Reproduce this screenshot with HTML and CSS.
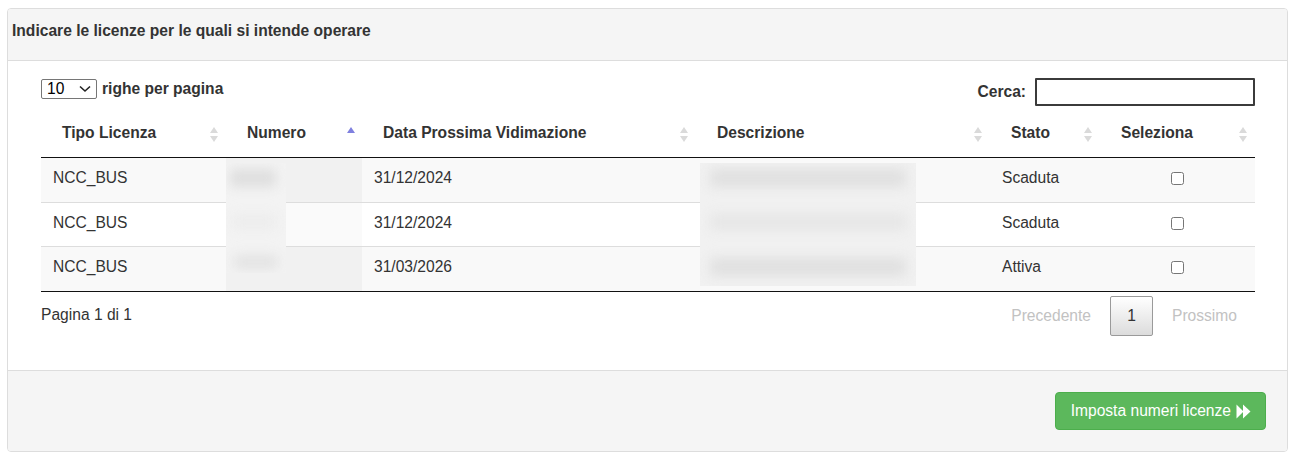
FILE: index.html
```html
<!DOCTYPE html>
<html lang="it">
<head>
<meta charset="utf-8">
<title>Licenze</title>
<link rel="stylesheet" href="styles.css">
</head>
<body>
<div class="panel">
  <div class="panel-heading">
    <h3 class="panel-title">Indicare le licenze per le quali si intende operare</h3>
  </div>
  <div class="panel-body">
    <div class="dt-top">
      <label class="dt-length">
        <span class="select-wrap">
          <select class="len-select"><option>10</option><option>25</option><option>50</option></select>
          <svg class="chev" width="12" height="8" viewBox="0 0 12 8" aria-hidden="true"><path d="M1 1.5 L6 6 L11 1.5" fill="none" stroke="#222" stroke-width="1.6"/></svg>
        </span>
        <span>righe per pagina</span>
      </label>
      <label class="dt-filter">
        <span>Cerca:</span>
        <input type="search" class="search-input">
      </label>
    </div>
    <div class="tbl-wrap">
      <table class="dt-table">
        <colgroup>
          <col class="c1"><col class="c2"><col class="c3"><col class="c4"><col class="c5"><col class="c6">
        </colgroup>
        <thead>
          <tr>
            <th class="sort">Tipo Licenza<span class="sort-icons"><i class="up"></i><i class="down"></i></span></th>
            <th class="sort asc">Numero<span class="sort-icons"><i class="up active"></i></span></th>
            <th class="sort">Data Prossima Vidimazione<span class="sort-icons"><i class="up"></i><i class="down"></i></span></th>
            <th class="sort">Descrizione<span class="sort-icons"><i class="up"></i><i class="down"></i></span></th>
            <th class="sort">Stato<span class="sort-icons"><i class="up"></i><i class="down"></i></span></th>
            <th class="sort">Seleziona<span class="sort-icons"><i class="up"></i><i class="down"></i></span></th>
          </tr>
        </thead>
        <tbody>
          <tr class="odd">
            <td>NCC_BUS</td><td class="sorted"></td><td>31/12/2024</td><td></td><td>Scaduta</td><td class="center"><input type="checkbox" class="chk"></td>
          </tr>
          <tr class="even">
            <td>NCC_BUS</td><td class="sorted"></td><td>31/12/2024</td><td></td><td>Scaduta</td><td class="center"><input type="checkbox" class="chk"></td>
          </tr>
          <tr class="odd">
            <td>NCC_BUS</td><td class="sorted"></td><td>31/03/2026</td><td></td><td>Attiva</td><td class="center"><input type="checkbox" class="chk"></td>
          </tr>
        </tbody>
      </table>
      <div class="redact redact-num">
        <span class="blob b1"></span>
        <span class="blob b2"></span>
        <span class="blob b3"></span>
      </div>
      <div class="redact redact-desc">
        <span class="line l1"></span>
        <span class="line l2"></span>
        <span class="line l3"></span>
      </div>
    </div>
    <div class="dt-bottom">
      <div class="dt-info">Pagina 1 di 1</div>
      <div class="dt-paginate">
        <span class="pg-link disabled">Precedente</span>
        <span class="pg-btn current">1</span>
        <span class="pg-link disabled">Prossimo</span>
      </div>
    </div>
  </div>
  <div class="panel-footer">
    <button class="btn-success" type="button">Imposta numeri licenze
      <svg class="fw-icon" width="15" height="15" viewBox="0 0 15 15" aria-hidden="true"><path d="M0.5 0.5 L7.5 7.5 L0.5 14.5 Z M7 0.5 L14.5 7.5 L7 14.5 Z" fill="#ffffff"/></svg>
    </button>
  </div>
</div>
</body>
</html>
```

FILE: styles.css
```css
* { box-sizing: border-box; }

html, body {
  margin: 0;
  padding: 0;
  background: #ffffff;
}

body {
  font-family: "Liberation Sans", Arial, sans-serif;
  font-size: 15.6px;
  color: #333333;
  padding: 8px 1px 0 7px;
}

.panel {
  border: 1px solid #dddddd;
  border-radius: 4px;
  background: #ffffff;
}

.panel-heading {
  background: #f5f5f5;
  border-bottom: 1px solid #dddddd;
  padding: 13px 5px 20px 4px;
  border-radius: 3px 3px 0 0;
}

.panel-title {
  margin: 0;
  font-size: 15.6px;
  line-height: 18px;
  font-weight: bold;
  color: #333333;
}

.panel-body {
  padding: 17px 32px 34px 33px;
}

/* top controls */
.dt-top {
  display: flex;
  justify-content: space-between;
  align-items: flex-start;
  height: 28px;
}

.dt-length {
  display: flex;
  align-items: center;
  gap: 5px;
  margin-top: 1px;
  font-weight: bold;
  line-height: 18px;
}

.select-wrap {
  position: relative;
  display: block;
  width: 56px;
  height: 20px;
}

.len-select {
  -webkit-appearance: none;
  appearance: none;
  display: block;
  width: 56px;
  height: 20px;
  font-family: "Liberation Sans", Arial, sans-serif;
  font-size: 15.6px;
  line-height: 18px;
  color: #000000;
  border: 1px solid #767676;
  border-radius: 2px;
  background: #ffffff;
  padding: 0 0 0 5px;
}

.chev {
  position: absolute;
  right: 6px;
  top: 6px;
  pointer-events: none;
}

.dt-filter {
  display: flex;
  align-items: center;
  gap: 9px;
  font-weight: bold;
  line-height: 18px;
}

.search-input {
  width: 220px;
  height: 28px;
  border: 2px solid #3b3b3b;
  border-radius: 1px;
  background: #ffffff;
  padding: 2px 4px;
  font-size: 15.6px;
  outline: none;
}

/* table */
.tbl-wrap {
  position: relative;
  margin-top: 6px;
}

.dt-table {
  width: 1214px;
  table-layout: fixed;
  border-collapse: collapse;
  border-bottom: 1px solid #111111;
}

.c1 { width: 185px; }
.c2 { width: 136px; }
.c3 { width: 334px; }
.c4 { width: 294px; }
.c5 { width: 110px; }
.c6 { width: 155px; }

.dt-table th {
  position: relative;
  text-align: left;
  font-weight: bold;
  line-height: 18px;
  padding: 12px 18px 15px 21px;
  border-bottom: 1px solid #111111;
  white-space: nowrap;
}

.sort-icons {
  position: absolute;
  right: 7px;
  top: 15px;
  width: 9px;
  height: 15px;
}

.sort-icons i {
  position: absolute;
  left: 0;
  width: 0;
  height: 0;
  border-left: 4.5px solid transparent;
  border-right: 4.5px solid transparent;
}

.sort-icons .up {
  top: 0;
  border-bottom: 6px solid #dadada;
}

.sort-icons .down {
  top: 9px;
  border-top: 6px solid #dadada;
}

.sort-icons .up.active {
  border-bottom-color: #7f80df;
}

.asc .sort-icons {
  right: 6px;
}

.dt-table td {
  line-height: 18px;
  padding: 11px 10px 15px 12px;
  border-top: 1px solid #dddddd;
}

.dt-table tr.even td {
  padding-bottom: 14px;
}

.dt-table tbody tr:first-child td {
  border-top: none;
}

.dt-table tr.odd td { background: #f9f9f9; }
.dt-table tr.even td { background: #ffffff; }
.dt-table tr.odd td.sorted { background: #f1f1f1; }
.dt-table tr.even td.sorted { background: #fafafa; }

.dt-table td.center {
  text-align: center;
  padding-left: 10px;
}

.chk {
  width: 13px;
  height: 13px;
  margin: 3px 0 0 0;
  vertical-align: top;
}

/* redaction overlays */
.redact {
  position: absolute;
  top: 51px;
  overflow: hidden;
}

.redact-num {
  left: 185px;
  width: 60px;
  height: 110px;
  background: #f3f3f3;
}

.redact-desc {
  left: 659px;
  width: 216px;
  height: 123px;
  background: #f1f1f1;
}

.blob, .line {
  position: absolute;
  display: block;
  filter: blur(6px);
}

.b1 { left: 4px; top: 6px; width: 46px; height: 18px; background: #dedede; }
.b2 { left: 6px; top: 52px; width: 44px; height: 14px; background: #ececec; }
.b3 { left: 8px; top: 92px; width: 44px; height: 14px; background: #e2e2e2; }

.l1 { left: 10px; top: 6px; width: 196px; height: 18px; background: #e0e0e0; }
.l2 { left: 10px; top: 51px; width: 196px; height: 16px; background: #e6e6e6; }
.l3 { left: 10px; top: 95px; width: 196px; height: 18px; background: #e0e0e0; }

/* bottom controls */
.dt-bottom {
  display: flex;
  justify-content: space-between;
  align-items: flex-start;
}

.dt-info {
  margin-top: 14px;
  line-height: 18px;
}

.dt-paginate {
  display: flex;
  align-items: center;
  margin-top: 4px;
  margin-right: -1px;
}

.pg-link {
  color: #c2c2c2;
  padding: 0 19px;
  line-height: 18px;
}

.pg-btn {
  display: flex;
  align-items: center;
  justify-content: center;
  width: 43px;
  height: 40px;
  border: 1px solid #9a9a9a;
  border-radius: 2px;
  background: linear-gradient(to bottom, #ffffff 0%, #dcdcdc 100%);
  color: #333333;
}

/* footer */
.panel-footer {
  background: #f5f5f5;
  border-top: 1px solid #dddddd;
  border-radius: 0 0 3px 3px;
  padding: 21px 21px 21px 0;
  display: flex;
  justify-content: flex-end;
}

.btn-success {
  display: flex;
  align-items: center;
  gap: 5px;
  height: 38px;
  padding: 0 14px 0 15px;
  background: #5cb85c;
  border: 1px solid #4cae4c;
  border-radius: 4px;
  color: #ffffff;
  font-family: "Liberation Sans", Arial, sans-serif;
  font-size: 15.6px;
  line-height: 18px;
  cursor: pointer;
}

.fw-icon {
  display: block;
}
```
